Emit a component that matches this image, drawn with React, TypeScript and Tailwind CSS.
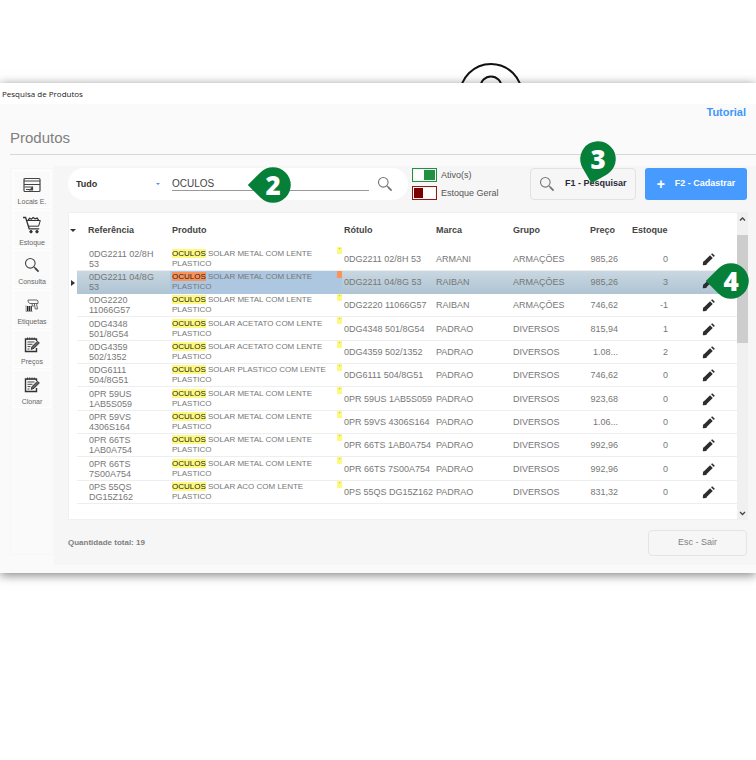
import type { ReactNode } from 'react'
import clsx from 'clsx'

type Product = {
  ref: [string, string]
  desc: string
  label: string
  brand: string
  group: string
  price: string
  stock: string
}

const products: Product[] = [
  { ref: ['0DG2211 02/8H', '53'], desc: 'SOLAR METAL COM LENTE', label: '0DG2211 02/8H 53', brand: 'ARMANI', group: 'ARMAÇÕES', price: '985,26', stock: '0' },
  { ref: ['0DG2211 04/8G', '53'], desc: 'SOLAR METAL COM LENTE', label: '0DG2211 04/8G 53', brand: 'RAIBAN', group: 'ARMAÇÕES', price: '985,26', stock: '3' },
  { ref: ['0DG2220', '11066G57'], desc: 'SOLAR METAL COM LENTE', label: '0DG2220 11066G57', brand: 'RAIBAN', group: 'ARMAÇÕES', price: '746,62', stock: '-1' },
  { ref: ['0DG4348', '501/8G54'], desc: 'SOLAR ACETATO COM LENTE', label: '0DG4348 501/8G54', brand: 'PADRAO', group: 'DIVERSOS', price: '815,94', stock: '1' },
  { ref: ['0DG4359', '502/1352'], desc: 'SOLAR ACETATO COM LENTE', label: '0DG4359 502/1352', brand: 'PADRAO', group: 'DIVERSOS', price: '1.08...', stock: '2' },
  { ref: ['0DG6111', '504/8G51'], desc: 'SOLAR PLASTICO COM LENTE', label: '0DG6111 504/8G51', brand: 'PADRAO', group: 'DIVERSOS', price: '746,62', stock: '0' },
  { ref: ['0PR 59US', '1AB5S059'], desc: 'SOLAR METAL COM LENTE', label: '0PR 59US 1AB5S059', brand: 'PADRAO', group: 'DIVERSOS', price: '923,68', stock: '0' },
  { ref: ['0PR 59VS', '4306S164'], desc: 'SOLAR METAL COM LENTE', label: '0PR 59VS 4306S164', brand: 'PADRAO', group: 'DIVERSOS', price: '1.06...', stock: '0' },
  { ref: ['0PR 66TS', '1AB0A754'], desc: 'SOLAR METAL COM LENTE', label: '0PR 66TS 1AB0A754', brand: 'PADRAO', group: 'DIVERSOS', price: '992,96', stock: '0' },
  { ref: ['0PR 66TS', '7S00A754'], desc: 'SOLAR METAL COM LENTE', label: '0PR 66TS 7S00A754', brand: 'PADRAO', group: 'DIVERSOS', price: '992,96', stock: '0' },
  { ref: ['0PS 55QS', 'DG15Z162'], desc: 'SOLAR ACO COM LENTE', label: '0PS 55QS DG15Z162', brand: 'PADRAO', group: 'DIVERSOS', price: '831,32', stock: '0' },
]

const SELECTED = 1

function Lens({ className }: { className?: string }) {
  return (
    <svg viewBox="0 0 16 16" className={className} fill="none" stroke="currentColor">
      <circle cx="6.3" cy="6.3" r="4.8" strokeWidth="1.1" />
      <path d="M9.8 9.8l1.4 1.4" strokeWidth="1.1" />
      <path d="M11 11l3.6 3.6" strokeWidth="1.8" />
    </svg>
  )
}

function Pencil() {
  return (
    <svg viewBox="0 0 14 14" className="size-3.5" fill="none" stroke="#2d2d2d" strokeWidth="3.8">
      <path d="M2.8 11.2l6.6-6.6" />
      <path d="M10.4 3.6l1.1-1.1" />
      <path d="M1.4 12.6l.3-2.6L4 12.3z" fill="#2d2d2d" strokeWidth="1.2" strokeLinejoin="round" />
    </svg>
  )
}

function CardIcon() {
  return (
    <svg viewBox="0 0 18 16" className="h-4 w-[18px]" fill="none" stroke="#444">
      <rect x="1" y="1.5" width="16" height="13" rx="1" strokeWidth="1.2" />
      <path d="M1 4h16M1 7.5h16" />
      <path d="M1.5 10h8M3 12.5h3.5M7 13l2.5-2.5V13z" strokeWidth="1.2" />
    </svg>
  )
}

function CartIcon() {
  return (
    <svg viewBox="0 0 18 18" className="size-[18px]" fill="none" stroke="#333">
      <path d="M0 1.5h2.6l3.6 11.3h10" strokeWidth="1.3" />
      <path d="M3.7 4.5h13.6l-1.7 5.7H5.5" />
      <path d="M5 4.3l1.5-2 2 .8 1.6-1.6 2 1.3 2-.7 1.6 2.2" strokeWidth="1.3" />
      <circle cx="8" cy="15.7" r="1.2" fill="#333" />
      <circle cx="14" cy="15.7" r="1.2" fill="#333" />
    </svg>
  )
}

function ScannerIcon() {
  return (
    <svg viewBox="0 0 14 14" className="size-3.5" fill="none" stroke="#666">
      <path d="M3 2h9l1 1v2.5H5L3.3 4.3z" />
      <path d="M9.3 5.5l1 5.5h2.2l-1-5.5M9.3 8H7.2V5.8" />
      <path d="M2.5 8v5M4.3 8v5M6.2 8v5" stroke="#222" strokeWidth="1.3" />
      <path d="M1 7.2v6.3h6.5" strokeWidth=".6" />
    </svg>
  )
}

function NoteIcon() {
  return (
    <svg viewBox="0 0 16 16" className="size-4" fill="none" stroke="#333">
      <path d="M12.5 11v3.5h-11V2h11v2" strokeWidth="1.4" />
      <path d="M3.5 .5v2M5.7 .5v2M8 .5v2M10.3 .5v2" />
      <path d="M3.5 5h7M3.5 7.3h5M3.5 9.6h3M3.5 12h2" strokeWidth=".9" />
      <path d="M7.2 12.3l1-2.8 5.3-5.3 1.8 1.8-5.3 5.3z" fill="#666" />
    </svg>
  )
}

const sideItems: { label: string; icon: ReactNode }[] = [
  { label: 'Locais E.', icon: <CardIcon /> },
  { label: 'Estoque', icon: <CartIcon /> },
  { label: 'Consulta', icon: <Lens className="size-4 text-[#444]" /> },
  { label: 'Etiquetas', icon: <ScannerIcon /> },
  { label: 'Preços', icon: <NoteIcon /> },
  { label: 'Clonar', icon: <NoteIcon /> },
]

// Numbered callout: a round head whose tip points left, or down for step 3
function Callout({ n, down = false, className }: { n: number; down?: boolean; className: string }) {
  return (
    <span className={clsx('pointer-events-none absolute z-10 flex size-[52px] items-center justify-center', className)}>
      <svg viewBox="-26 -26 52 52" className="absolute inset-0 size-full" fill="#067f38">
        <path
          d="M-25.2 0L-12.6 -12.6A17.8 17.8 0 1 1 -12.6 12.6Z"
          transform={down ? 'rotate(-75)' : undefined}
        />
      </svg>
      <span className="relative font-['Noto_Sans',sans-serif] text-[26px] leading-none font-black text-white">{n}</span>
    </span>
  )
}

function SwitchRow({ id, label, on }: { id: string; label: string; on: boolean }) {
  return (
    <div className="flex items-center gap-1">
      <input
        id={id}
        type="checkbox"
        role="switch"
        defaultChecked={on}
        className={clsx(
          'h-3.5 w-[25px] appearance-none border bg-white bg-clip-content bg-no-repeat p-px',
          on
            ? 'border-[#1f9140] bg-[linear-gradient(90deg,#fff_50%,#1f9140_50%)]'
            : 'border-[#8b1a12] bg-[linear-gradient(90deg,#7d0000_45%,#fff_45%)]',
        )}
      />
      <label htmlFor={id} className="text-[9px] leading-3 text-[#555]">{label}</label>
    </div>
  )
}

function Row({ p, selected }: { p: Product; selected: boolean }) {
  const cell = selected
    ? 'border-b border-[#b0c5d4] bg-linear-to-b from-[#c9d7e1] to-[#b0c5d4]'
    : 'border-b border-[#eee]'
  return (
    <tr className="h-[23px] nth-[3n+1]:h-6">
      <td className="pl-0.5">
        {selected && <span className="block size-0 border-y-[3px] border-l-4 border-y-transparent border-l-[#333]" />}
      </td>
      <td className={clsx(cell, 'pl-3')}>{p.ref[0]}<br />{p.ref[1]}</td>
      <td
        className={clsx(
          'relative border-b pl-0.5 text-[8px] whitespace-nowrap',
          selected ? 'border-[#adc7e0] bg-[#adc7e0]' : 'border-[#eee]',
        )}
      >
        <mark className={clsx('text-[#222]', selected ? 'bg-[#f9935a]' : 'bg-[#fdf97f]')}>OCULOS</mark> {p.desc}
        <br />PLASTICO
        <span className={clsx('absolute top-0 right-0 h-[7px] w-[5px] text-center text-[6px] leading-[7px]', selected ? 'bg-[#f9935a]' : 'bg-[#fdf97f]')}>
          {!selected && "'"}
        </span>
      </td>
      <td className={clsx(cell, 'pl-0.5 whitespace-nowrap')}>{p.label}</td>
      <td className={clsx(cell, 'pl-0.5')}>{p.brand}</td>
      <td className={clsx(cell, 'pl-0.5')}>{p.group}</td>
      <td className={clsx(cell, 'pr-3 text-right')}>{p.price}</td>
      <td className={clsx(cell, 'pr-3 text-right')}>{p.stock}</td>
      <td className={clsx(cell, 'relative')}>
        <button aria-label="Editar" className="mx-auto block"><Pencil /></button>
        {selected && <Callout n={4} className="-top-4 left-[25px]" />}
      </td>
    </tr>
  )
}

export default function App() {
  return (
    <div className="overflow-hidden bg-white font-['Liberation_Sans',Arial,sans-serif]">
      <div className="flex h-[83px] items-end pl-[61%]">
        <svg viewBox="0 0 60 20" className="h-5 w-[60px]" fill="none" stroke="#111" strokeWidth="2">
          <circle cx="30" cy="32" r="31" />
          <circle cx="30" cy="24" r="10.5" />
        </svg>
      </div>

      <div className="mb-8 bg-[#fafafa] pb-2 shadow-[0_2px_10px_rgba(0,0,0,0.5)]">
        <div className="h-[21px] bg-white pl-0.5 font-['Open_Sans',sans-serif] text-[8px] leading-[21px] text-[#222]">
          Pesquisa de Produtos
        </div>

        <header className="ml-2.5 border-b border-[#d8d8d8] pb-2">
          <div className="flex justify-end pr-2.5">
            <a href="#tutorial" className="text-[11px] leading-[17px] font-bold text-[#3f97fb]">Tutorial</a>
          </div>
          <h1 className="pt-2 text-[15px] leading-[17px] text-[#808080]">Produtos</h1>
        </header>

        <div className="mt-[11px] flex pl-2.5">
          <nav className="mt-0.5 mb-2.5 flex w-11 shrink-0 flex-col gap-0.5 border border-[#f7f7f7] px-0.5 pt-px">
            {sideItems.map((s) => (
              <button key={s.label} className="flex h-[38px] flex-col items-center border border-white pt-[5px] text-[7px] leading-[10px] text-[#666]">
                <span className="flex h-[18px] items-center">{s.icon}</span>
                <span className="pt-1 whitespace-nowrap">{s.label}</span>
              </button>
            ))}
          </nav>

          <main className="min-w-0 flex-1 bg-[#f6f6f6] pt-0.5 pr-2 pb-[9px] pl-3.5">
            <div className="flex items-start pr-px">
              <div className="relative flex h-8 flex-1 items-center rounded-full bg-white pr-[15px] pl-1">
                <select
                  aria-label="Campo de pesquisa"
                  defaultValue="Tudo"
                  className="w-[90px] appearance-none pl-1 text-[9px] leading-4 font-bold text-[#333]"
                >
                  <option>Tudo</option>
                </select>
                <span className="pointer-events-none -ml-1.5 size-0 border-x-2 border-t-2 border-x-transparent border-t-[#3f97fb]" />
                <input
                  aria-label="Pesquisa"
                  defaultValue="OCULOS"
                  className="mr-2 ml-3 h-3.5 min-w-0 flex-1 border-b border-[#999] text-[10px] leading-3 text-[#444]"
                />
                <button aria-label="Buscar" className="text-[#777]"><Lens className="size-4" /></button>
                <Callout n={2} className="-top-[9px] left-[179px]" />
              </div>

              <div className="ml-1 flex w-[118px] flex-col gap-1">
                <SwitchRow id="ativos" label="Ativo(s)" on />
                <SwitchRow id="geral" label="Estoque Geral" on={false} />
              </div>

              <div className="relative">
                <button className="flex h-8 w-[106px] items-center gap-2.5 rounded border border-[#e2e2e2] pl-2 text-[9px] font-bold whitespace-nowrap text-[#2b2b3a]">
                  <Lens className="size-4 shrink-0 text-[#777]" />
                  F1 - Pesquisar
                </button>
                <Callout n={3} down className="-top-[35px] left-[42px]" />
              </div>
              <button className="ml-[9px] flex h-8 w-[102px] items-center justify-center gap-2.5 rounded-[3px] bg-[#479bff] text-[9px] font-bold whitespace-nowrap text-white">
                <span className="text-sm leading-none">+</span>
                F2 - Cadastrar
              </button>
            </div>

            <div className="mt-3 flex border border-r-0 border-[#f0f0f0] bg-white">
              <div className="min-w-0 flex-1 pb-[15px]">
                <table className="w-full table-fixed border-separate border-spacing-0 text-[9px] leading-[10px] text-[#777]">
                  <colgroup>
                    <col className="w-2" />
                    <col className="w-[93px]" />
                    <col />
                    <col className="w-[92px]" />
                    <col className="w-[77px]" />
                    <col className="w-[77px]" />
                    <col className="w-[42px]" />
                    <col className="w-[50px]" />
                    <col className="w-[57px]" />
                  </colgroup>
                  <thead>
                    <tr className="h-[34px] text-left text-[#444]">
                      <th><span className="ml-px block size-0 border-x-[3px] border-t-[3px] border-x-transparent border-t-[#333]" /></th>
                      <th className="pl-[11px]">Referência</th>
                      <th className="pl-0.5">Produto</th>
                      <th className="pl-0.5">Rótulo</th>
                      <th className="pl-0.5">Marca</th>
                      <th className="pl-0.5">Grupo</th>
                      <th className="pl-0.5">Preço</th>
                      <th className="pl-0.5">Estoque</th>
                      <th />
                    </tr>
                  </thead>
                  <tbody>
                    {products.map((p, i) => (
                      <Row key={p.label} p={p} selected={i === SELECTED} />
                    ))}
                  </tbody>
                </table>
              </div>
              <div className="flex w-[11px] shrink-0 flex-col items-center bg-[#f0f0f0] text-[#444]">
                <svg viewBox="0 0 11 22" className="h-[22px] w-[11px]" fill="none" stroke="currentColor" strokeWidth="1.3">
                  <path d="M3 7.5l2.5-2.5 2.5 2.5" />
                </svg>
                <div className="h-[108px] w-full bg-[#cdcdcd]" />
                <svg viewBox="0 0 11 12" className="mt-auto h-3 w-[11px]" fill="none" stroke="currentColor" strokeWidth="1.3">
                  <path d="M3 5l2.5 2.5L8 5" />
                </svg>
              </div>
            </div>

            <footer className="flex items-center justify-between pt-2.5 pr-px">
              <span className="text-[8px] font-bold text-[#808080]">Quantidade total: 19</span>
              <button className="h-[26px] w-[99px] rounded border border-[#e4e4e4] text-[9px] text-[#808080]">Esc - Sair</button>
            </footer>
          </main>
        </div>
      </div>
    </div>
  )
}
